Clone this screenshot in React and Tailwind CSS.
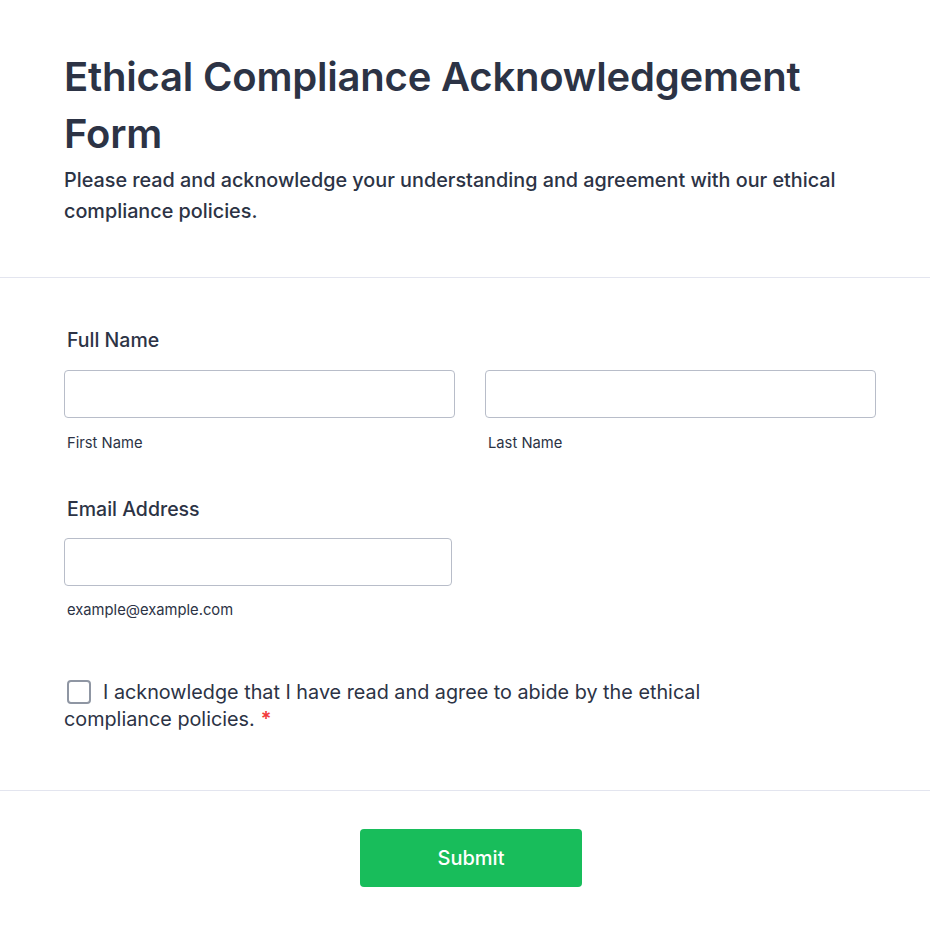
import React, { useState } from 'react';

export default function App() {
  const [agreed, setAgreed] = useState(false);

  return (
    <div className="min-h-screen w-[930px] bg-white text-[#2c3345] font-['Inter',sans-serif]">
      {/* Header */}
      <div className="pl-16 pr-[54px] pt-12 pb-[50px] border-b border-[#e3e5ef]">
        <h1 className="text-[40px] leading-[57px] font-semibold tracking-[-0.2px]">
          Ethical Compliance Acknowledgement Form
        </h1>
        <p className="mt-[3px] w-[800px] text-[19.8px] leading-[31px] font-medium">
          Please read and acknowledge your understanding and agreement with our ethical compliance policies.
        </p>
      </div>

      {/* Fields */}
      <div className="pl-16 pr-[54px] pt-[50px] pb-[57px] border-b border-[#e3e5ef]">
        <label className="block pl-[3px] text-[19.5px] leading-6 font-medium">Full Name</label>
        <div className="mt-[18px] grid grid-cols-2 gap-[30px]">
          <div>
            <input type="text" className="block w-full h-12 rounded border border-[#b8bdc9] px-3 text-[16px] outline-none focus:border-[#2e69ff]" />
            <div className="mt-4 pl-[3px] text-[14.75px] leading-[18px]">First Name</div>
          </div>
          <div>
            <input type="text" className="block w-full h-12 rounded border border-[#b8bdc9] px-3 text-[16px] outline-none focus:border-[#2e69ff]" />
            <div className="mt-4 pl-[3px] text-[14.75px] leading-[18px]">Last Name</div>
          </div>
        </div>

        <label className="mt-[45px] block pl-[3px] text-[19.5px] leading-6 font-medium">Email Address</label>
        <input type="email" className="mt-[17px] block w-[388px] h-12 rounded border border-[#b8bdc9] px-3 text-[16px] outline-none focus:border-[#2e69ff]" />
        <div className="mt-[15px] pl-[3px] text-[14.75px] leading-[18px]">example@example.com</div>

        <div className="mt-[60px] w-[730px] text-[19.8px] leading-[27px]">
          <label className="cursor-pointer">
            <span
              onClick={() => setAgreed(!agreed)}
              className={`inline-block align-[-5px] ml-[3px] mr-3 w-6 h-6 rounded border-2 ${agreed ? 'border-[#2e69ff] bg-[#2e69ff]' : 'border-[#8f96a3] bg-white'}`}
            ></span>
            I acknowledge that I have read and agree to abide by the ethical compliance policies.
          </label>
          <span className="inline-block ml-1.5 text-[#f23a3c] font-semibold">*</span>
        </div>
      </div>

      {/* Submit */}
      <div className="flex justify-center pl-16 pr-[52px] pt-[38px] pb-[50px]">
        <button type="submit" className="w-[222px] h-[58px] rounded bg-[#18bd5b] hover:bg-[#16aa52] text-white text-[20px] font-medium">
          Submit
        </button>
      </div>
    </div>
  );
}
